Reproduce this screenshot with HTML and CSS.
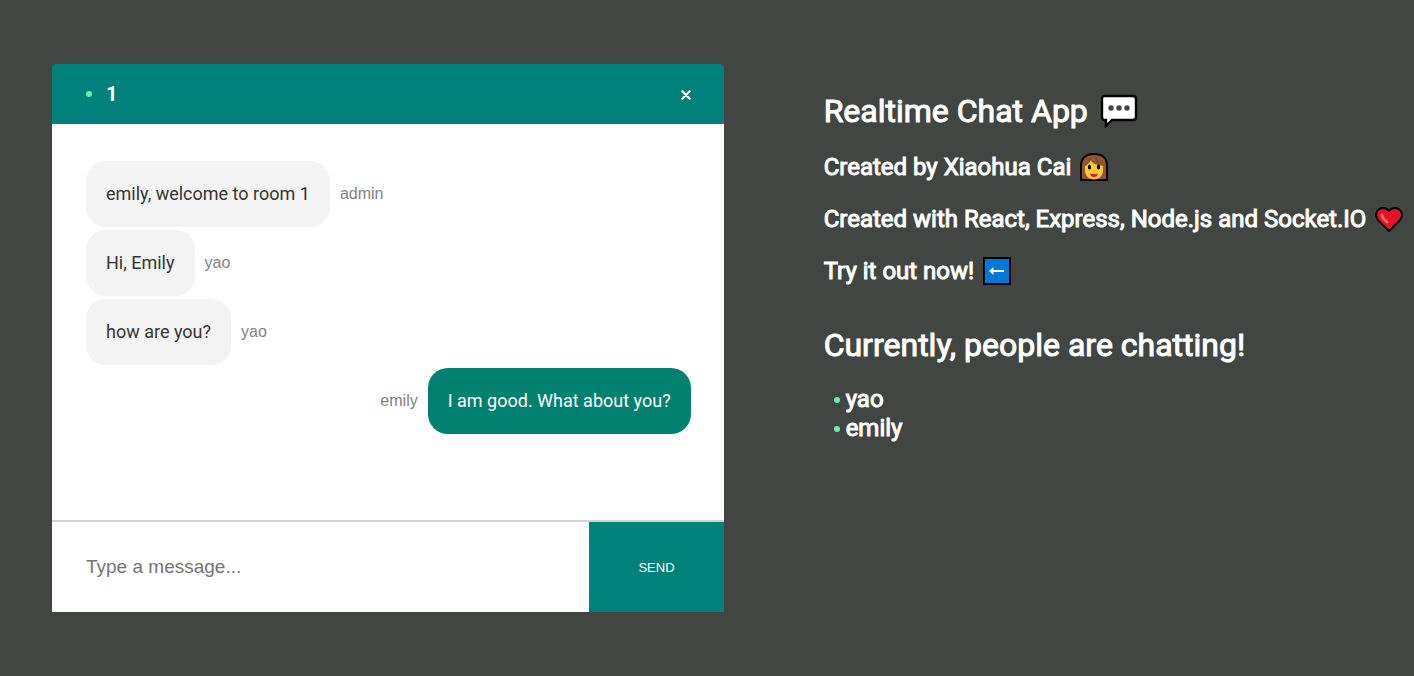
FILE: index.html
```html
<!DOCTYPE html>
<html lang="en">
<head>
<meta charset="utf-8">
<meta name="viewport" content="width=device-width, initial-scale=1">
<title>Realtime Chat App</title>
<link rel="stylesheet" href="styles.css">
</head>
<body>
<main class="page">
  <section class="chat">
    <header class="info-bar">
      <span class="online-dot"></span>
      <h3 class="room">1</h3>
      <a class="close" href="#" aria-label="Leave room">
        <svg width="10" height="10" viewBox="0 0 10 10"><path d="M1.3 1.3 8.7 8.7M8.7 1.3 1.3 8.7" stroke="#fff" stroke-width="2.1" stroke-linecap="round"/></svg>
      </a>
    </header>
    <div class="messages">
      <div class="message"><p class="bubble">emily, welcome to room 1</p><span class="sender">admin</span></div>
      <div class="message"><p class="bubble">Hi, Emily</p><span class="sender">yao</span></div>
      <div class="message"><p class="bubble">how are you?</p><span class="sender">yao</span></div>
      <div class="message own"><span class="sender">emily</span><p class="bubble">I am good. What about you?</p></div>
    </div>
    <form class="composer">
      <input class="composer-input" type="text" placeholder="Type a message..." aria-label="Message">
      <button class="send" type="button">SEND</button>
    </form>
  </section>
  <aside class="about">
    <h1 class="title">Realtime Chat App
      <svg class="emoji-large" viewBox="0 0 38 34" aria-hidden="true"><path d="M5 2h28q3 0 3 3v18q0 3-3 3H12l-6 6v-6H5q-3 0-3-3V5q0-3 3-3z" fill="#fff" stroke="#000" stroke-width="2.4"/><g fill="#424642"><circle cx="11" cy="14" r="2.7"/><circle cx="19" cy="14" r="2.7"/><circle cx="27" cy="14" r="2.7"/></g></svg>
    </h1>
    <h2 class="line">Created by Xiaohua Cai
      <svg class="emoji" viewBox="0 0 28 28" aria-hidden="true"><path d="M1 27V13C1 5 6 1 14 1s13 4 13 12v14z" fill="#8e562e" stroke="#000" stroke-width="1.8"/><path d="M5 13C8 12 9 9 10 7c3 4 7 5 13 6v4c0 6-4 9.500-9 9.500s-9-3.500-9-9.500z" fill="#ffc83d"/><path d="M10 5 9 10M16 5l2 5" stroke="#6d4124"/><ellipse cx="9.500" cy="14" rx="1.600" ry="2.600"/><ellipse cx="18.500" cy="14" rx="1.600" ry="2.600"/><path d="M13 18h2" stroke="#e39d2b"/><path d="M10 20.500q4 1.500 8 0-1 3.500-4 3.500t-4-3.500z" fill="#e81224"/></svg>
    </h2>
    <h2 class="line">Created with React, Express, Node.js and Socket.IO
      <svg class="emoji" viewBox="0 0 28 28" aria-hidden="true"><path d="M14 26 3 15C-1 10 2 3 8 3q4 0 6 3 2-3 6-3c6 0 9 7 5 12z" fill="#e81224" stroke="#000" stroke-width="1.9" stroke-linejoin="round"/><path d="M7 10q0 3 5 7" fill="none" stroke="#ef705f" stroke-width="2.8" stroke-linecap="round"/></svg>
    </h2>
    <h2 class="line">Try it out now!
      <svg class="emoji" viewBox="0 0 28 28" aria-hidden="true"><path d="M1 1h26v26H1z" fill="#0078d7" stroke="#000" stroke-width="2"/><path d="M9 14h12" stroke="#fff" stroke-width="2"/><path d="m6 14 4.5-4v8z" fill="#fff"/></svg>
    </h2>
    <h1 class="title people">Currently, people are chatting!</h1>
    <ul class="users">
      <li class="user"><span class="online-dot"></span>yao</li>
      <li class="user"><span class="online-dot"></span>emily</li>
    </ul>
  </aside>
</main>
</body>
</html>
```
FILE: styles.css
```css
* { box-sizing: border-box; }
body { margin: 0; background: #424642; font-family: Roboto, "Liberation Sans", sans-serif; }
h1, h2, h3, p, ul { margin: 0; padding: 0; }

.page { display: flex; align-items: center; gap: 100px; min-height: 100vh; padding: 0 0 0 52px; }

.chat { flex: 0 0 auto; width: 47.5vw; display: flex; flex-direction: column; min-height: 548px; }
.info-bar { display: flex; align-items: center; min-height: 60px; padding: 0 33px 0 34px; background: #00807b; color: #fff; border-radius: 4px 4px 0 0; }
.online-dot { flex: none; width: 6px; height: 6px; border-radius: 50%; background: #69f0ae; }
.room { margin-left: 14px; font-size: 20px; line-height: 24px; }
.close { display: flex; margin-left: auto; padding-top: 2px; }

.messages { flex: 1; display: flex; flex-direction: column; gap: 3px; padding: 37px 33px 34px 34px; background: #fff; }
.message { display: flex; align-items: center; gap: 10px; }
.own { justify-content: flex-end; }
.bubble { padding: 22px 20px; border-radius: 20px; background: #f3f3f3; color: #353535; font-size: 18px; line-height: 22px; }
.own .bubble { background: #00806f; color: #fff; }
.sender { color: #828282; font-family: "Liberation Sans", Arial, sans-serif; font-size: 16px; line-height: 20px; }

.composer { display: flex; border-top: 2px solid #d3d3d3; background: #fff; }
.composer-input { flex: 1; min-width: 0; height: 90px; padding: 0 34px; border: 0; font: 19px "Liberation Sans", Arial, sans-serif; }
.composer-input::placeholder { color: #757575; }
.send { width: 20%; border: 0; background: #00807b; color: #fff; font: 13px "Liberation Sans", Arial, sans-serif; }

.about { flex: 1; align-self: flex-start; padding-top: 91px; color: #fff; white-space: nowrap; -webkit-text-stroke: 1px #fff; }
.title { font-size: 32px; font-weight: 400; line-height: 40px; }
.line { margin-top: 24px; font-size: 24px; font-weight: 400; line-height: 28px; }
.title + .line { margin-top: 22px; }
.emoji-large { width: 38px; height: 34px; margin-left: 4px; vertical-align: -6px; }
.emoji { width: 28px; height: 28px; margin-left: 3px; vertical-align: -6px; }
.people { margin-top: 40px; }
.users { margin-top: 20px; padding-left: 10px; list-style: none; font-size: 24px; line-height: 29px; }
.user { display: flex; align-items: center; gap: 6px; }
```
